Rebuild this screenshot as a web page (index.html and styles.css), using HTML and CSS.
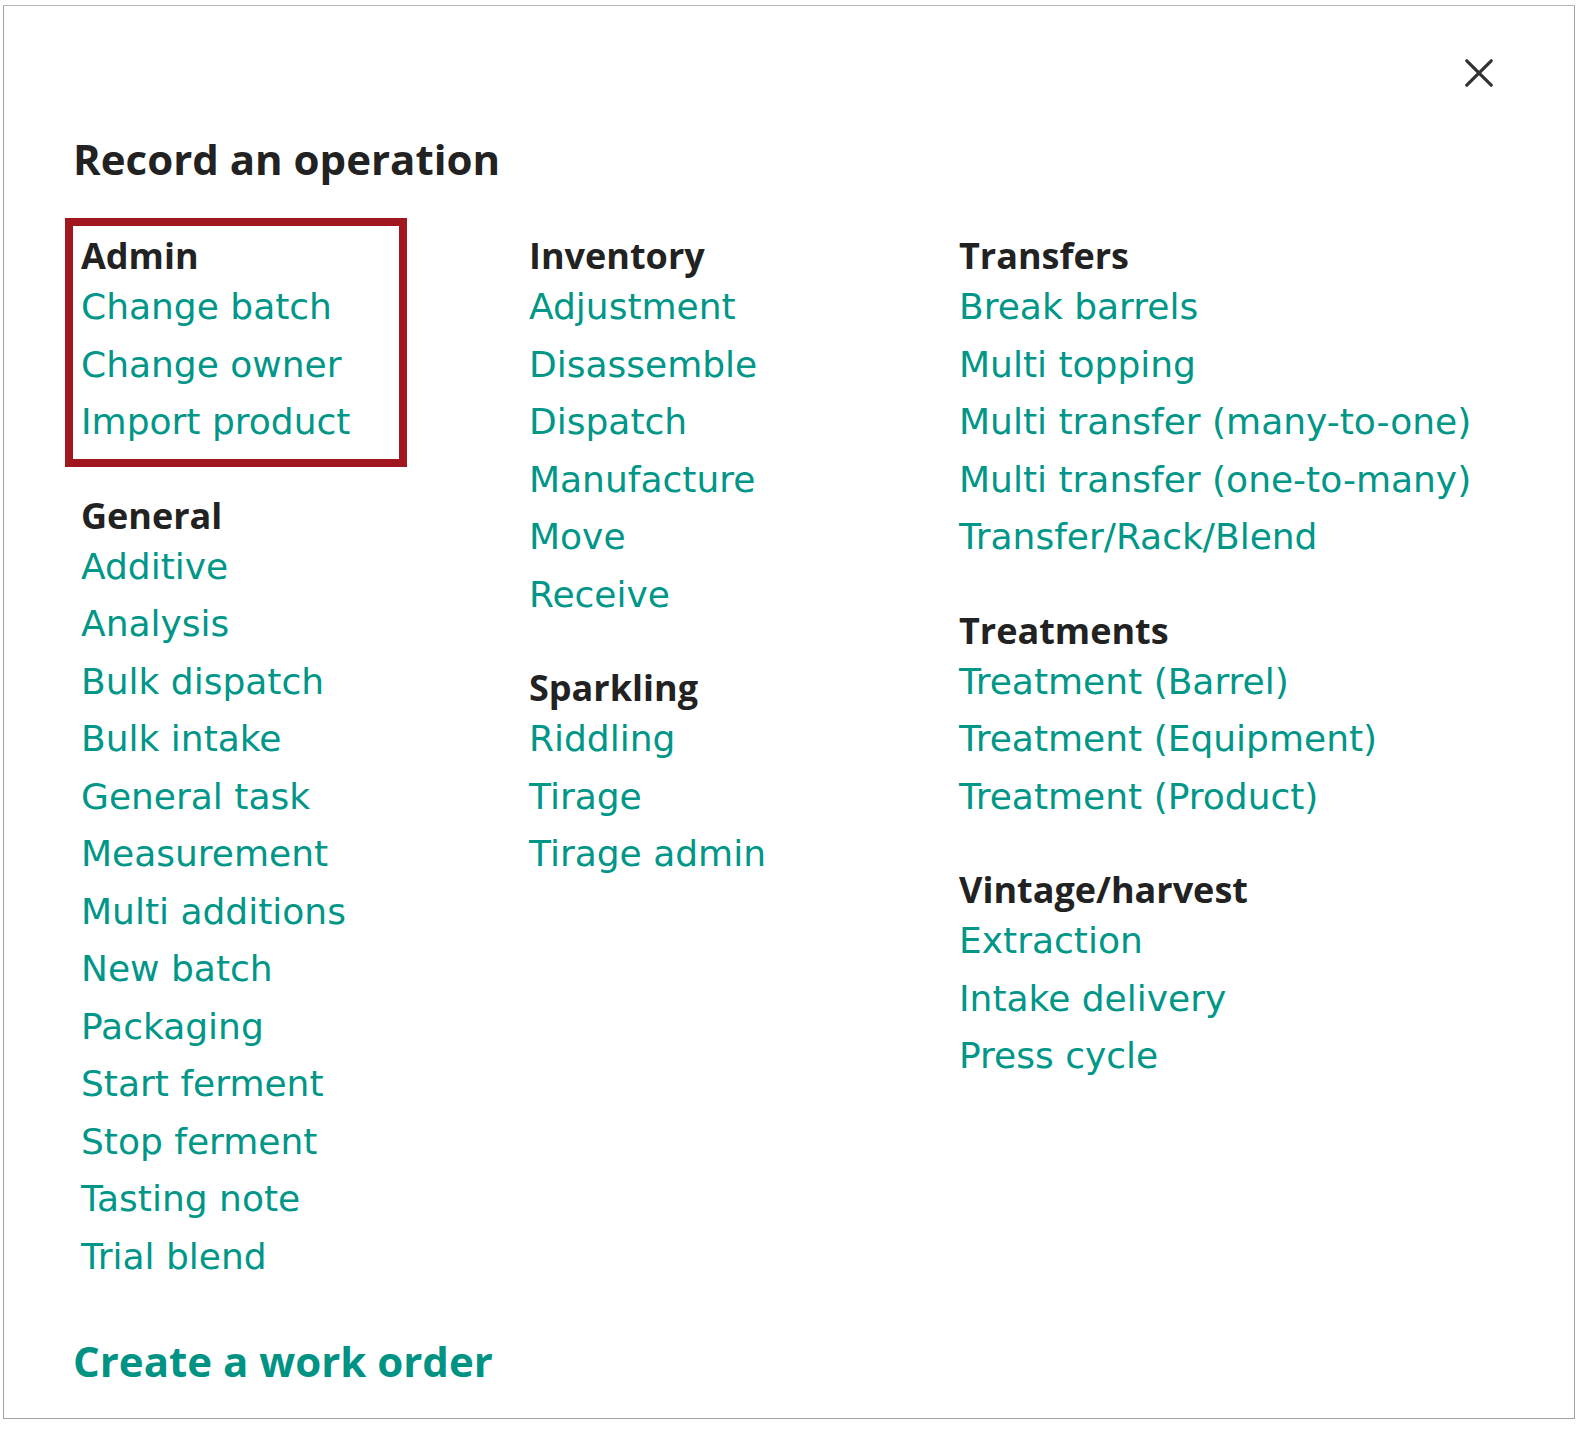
FILE: index.html
```html
<!DOCTYPE html>
<html lang="en">
<head>
  <meta charset="UTF-8">
  <meta name="viewport" content="width=device-width, initial-scale=1.0">
  <title>Record an operation</title>
  <link rel="stylesheet" href="styles.css">
</head>
<body>
  <div class="modal">
    <button class="close" aria-label="Close">
      <svg width="28" height="28" viewBox="0 0 28 28">
        <line x1="1.8" y1="1.8" x2="26.2" y2="26.2" />
        <line x1="26.2" y1="1.8" x2="1.8" y2="26.2" />
      </svg>
    </button>

    <h1 class="title">Record an operation</h1>

    <div class="columns">
      <div class="column">
        <div class="group highlight">
          <h2>Admin</h2>
          <a href="#">Change batch</a>
          <a href="#">Change owner</a>
          <a href="#">Import product</a>
        </div>
        <div class="group">
          <h2>General</h2>
          <a href="#">Additive</a>
          <a href="#">Analysis</a>
          <a href="#">Bulk dispatch</a>
          <a href="#">Bulk intake</a>
          <a href="#">General task</a>
          <a href="#">Measurement</a>
          <a href="#">Multi additions</a>
          <a href="#">New batch</a>
          <a href="#">Packaging</a>
          <a href="#">Start ferment</a>
          <a href="#">Stop ferment</a>
          <a href="#">Tasting note</a>
          <a href="#">Trial blend</a>
        </div>
      </div>

      <div class="column">
        <div class="group">
          <h2>Inventory</h2>
          <a href="#">Adjustment</a>
          <a href="#">Disassemble</a>
          <a href="#">Dispatch</a>
          <a href="#">Manufacture</a>
          <a href="#">Move</a>
          <a href="#">Receive</a>
        </div>
        <div class="group">
          <h2>Sparkling</h2>
          <a href="#">Riddling</a>
          <a href="#">Tirage</a>
          <a href="#">Tirage admin</a>
        </div>
      </div>

      <div class="column">
        <div class="group">
          <h2>Transfers</h2>
          <a href="#">Break barrels</a>
          <a href="#">Multi topping</a>
          <a href="#">Multi transfer (many-to-one)</a>
          <a href="#">Multi transfer (one-to-many)</a>
          <a href="#">Transfer/Rack/Blend</a>
        </div>
        <div class="group">
          <h2>Treatments</h2>
          <a href="#">Treatment (Barrel)</a>
          <a href="#">Treatment (Equipment)</a>
          <a href="#">Treatment (Product)</a>
        </div>
        <div class="group">
          <h2>Vintage/harvest</h2>
          <a href="#">Extraction</a>
          <a href="#">Intake delivery</a>
          <a href="#">Press cycle</a>
        </div>
      </div>
    </div>

    <a class="work-order" href="#">Create a work order</a>
  </div>
</body>
</html>
```

FILE: styles.css
```css
* {
  box-sizing: border-box;
}
body {
  margin: 0;
  background: #fff;
  font-family: 'DejaVu Sans', sans-serif;
}
.modal {
  position: relative;
  margin: 5px 9px 0 3px;
  height: 1414px;
  border: 1px solid #a3a3a3;
  border-top-color: #b5b5b5;
  padding: 125px 0 0 69px;
}
.close {
  position: absolute;
  top: 53px;
  right: 81px;
  width: 28px;
  height: 28px;
  padding: 0;
  border: none;
  background: none;
  cursor: pointer;
}
.close svg {
  display: block;
}
.close line {
  stroke: #333;
  stroke-width: 3.2;
  stroke-linecap: round;
}
.title {
  margin: 0;
  font-family: 'Open Sans', sans-serif;
  font-size: 42px;
  font-weight: 700;
  line-height: 56px;
  color: #222;
}
.columns {
  display: grid;
  grid-template-columns: 448px 430px 1fr;
  margin: 47px 0 0 8px;
}
.group + .group {
  margin-top: 43px;
}
.group h2 {
  margin: 0;
  font-family: 'Open Sans', sans-serif;
  font-size: 36px;
  font-weight: 700;
  line-height: 44px;
  color: #222;
}
.group a {
  display: block;
  font-size: 36px;
  line-height: 57.5px;
  color: #009688;
  text-decoration: none;
  white-space: nowrap;
}
.highlight {
  width: 310px;
  outline: 8px solid #a0171f;
  outline-offset: 8px;
}
.work-order {
  display: inline-block;
  margin-top: 48px;
  font-family: 'Open Sans', sans-serif;
  font-size: 42px;
  font-weight: 700;
  line-height: 56px;
  color: #009384;
  text-decoration: none;
}
```
